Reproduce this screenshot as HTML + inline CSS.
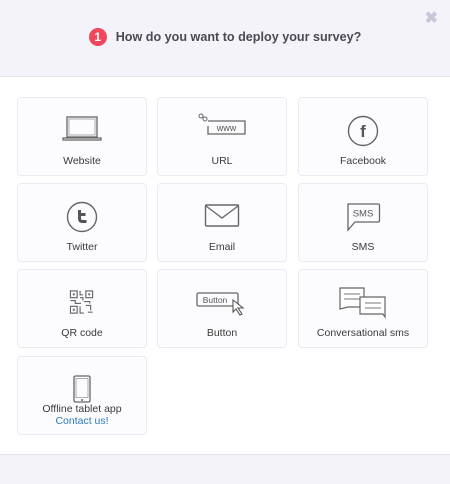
<!DOCTYPE html>
<html><head><style>
*{margin:0;padding:0;box-sizing:border-box}
body{width:450px;height:484px;background:#fff;font-family:"Liberation Sans",sans-serif;position:relative;overflow:hidden;color:#444}
.hdr{position:absolute;left:0;top:0;width:450px;height:77px;background:#f4f3fa;border-bottom:1px solid #e4e3ee}
.ttl{position:absolute;top:28px;left:0;width:450px;text-align:center;font-size:12.6px;font-weight:bold;color:#4a4a52;line-height:18px}
.num{display:inline-block;width:18px;height:18px;border-radius:50%;background:#f0485a;color:#fff;font-size:12px;line-height:18px;text-align:center;margin-right:9px;vertical-align:top}
.x{position:absolute;right:12px;top:8px;color:#c9c6dc;font-size:16px;font-weight:bold}
.card{position:absolute;width:130px;height:79px;border:1px solid #ebeaf3;border-radius:4px;background:#fcfcff}
.lbl{position:absolute;left:0;width:100%;top:57px;text-align:center;font-size:10.5px;color:#3a3a3a}
.card svg{position:absolute;left:50%;transform:translateX(-50%)}
.ftr{position:absolute;left:0;top:454px;width:450px;height:30px;background:#f4f3fa;border-top:1px solid #e4e3ee}
</style></head><body>
<div class="hdr"><div class="ttl"><span class="num">1</span>How do you want to deploy your survey?</div><div class="x">✖</div></div>

<div class="card" style="left:17px;top:97px">
<svg width="40" height="26" viewBox="0 0 40 26" style="top:18px"><rect x="5" y="1" width="30" height="20" fill="none" stroke="#666" stroke-width="1.3"/><rect x="7" y="3" width="26" height="16" fill="none" stroke="#999" stroke-width=".8"/><path d="M1 22h38v2H1z" fill="none" stroke="#666" stroke-width="1.2"/></svg>
<div class="lbl">Website</div></div>
<div class="card" style="left:157px;top:97px">
<svg width="48" height="26" viewBox="0 0 48 26" style="top:15px"><circle cx="3" cy="3" r="2" fill="none" stroke="#666"/><circle cx="7" cy="6" r="2" fill="none" stroke="#666"/><path d="M10 8h37v13H10V13" fill="none" stroke="#666" stroke-width="1.3"/><text x="28.5" y="18" font-size="9" text-anchor="middle" fill="#555" font-family="Liberation Sans">www</text></svg>
<div class="lbl">URL</div></div>
<div class="card" style="left:298px;top:97px">
<svg width="32" height="32" viewBox="0 0 32 32" style="top:17px"><circle cx="16" cy="16" r="14.5" fill="none" stroke="#666" stroke-width="1.4"/><text x="16" y="22" font-size="17" font-weight="bold" text-anchor="middle" fill="#555" font-family="Liberation Sans">f</text></svg>
<div class="lbl">Facebook</div></div>

<div class="card" style="left:17px;top:183px">
<svg width="32" height="32" viewBox="0 0 32 32" style="top:17px"><circle cx="16" cy="16" r="14.5" fill="none" stroke="#666" stroke-width="1.4"/><path d="M13.5 9v8.5q0 3 3 3h4M13.5 13.5h6" fill="none" stroke="#555" stroke-width="3"/></svg>
<div class="lbl">Twitter</div></div>
<div class="card" style="left:157px;top:183px">
<svg width="36" height="24" viewBox="0 0 36 24" style="top:20px"><rect x="1.5" y="1" width="33" height="21" rx="1" fill="none" stroke="#666" stroke-width="1.4"/><path d="M2 2l16 12 16-12" fill="none" stroke="#666" stroke-width="1.3"/></svg>
<div class="lbl">Email</div></div>
<div class="card" style="left:298px;top:183px">
<svg width="36" height="30" viewBox="0 0 36 30" style="top:19px"><path d="M3 1h30q1.5 0 1.5 1.5v15q0 1.5-1.5 1.5H10l-7 8V2.5Q3 1 3 1z" fill="none" stroke="#666" stroke-width="1.3"/><text x="18" y="13.5" font-size="9.5" text-anchor="middle" fill="#555" font-family="Liberation Sans">SMS</text></svg>
<div class="lbl">SMS</div></div>

<div class="card" style="left:17px;top:269px">
<svg width="27" height="27" viewBox="0 0 28 28" style="top:19px"><g fill="none" stroke="#666" stroke-width="1.2"><rect x="2" y="2" width="7" height="7"/><rect x="18" y="2" width="7" height="7"/><rect x="2" y="18" width="7" height="7"/><path d="M12 2v4h3M12 9h3v3M2 12h5v3h6M16 13h6v2M18 17h5v5M12 18v7h4M20 24h5"/></g><rect x="4.5" y="4.5" width="2" height="2" fill="#666"/><rect x="20.5" y="4.5" width="2" height="2" fill="#666"/><rect x="4.5" y="20.5" width="2" height="2" fill="#666"/></svg>
<div class="lbl">QR code</div></div>
<div class="card" style="left:157px;top:269px">
<svg width="52" height="28" viewBox="0 0 52 28" style="top:21px"><rect x="1" y="2" width="41" height="13" rx="1.5" fill="none" stroke="#666" stroke-width="1.3"/><text x="19" y="12" font-size="8.5" text-anchor="middle" fill="#555" font-family="Liberation Sans">Button</text><path d="M37 9l0 12 3-3 4 6 2-1-4-6h5z" fill="#fff" stroke="#555" stroke-width="1.1"/></svg>
<div class="lbl">Button</div></div>
<div class="card" style="left:298px;top:269px">
<svg width="50" height="32" viewBox="0 0 50 32" style="top:17px"><path d="M2 1h24v19H10l-8 2z" fill="#fff" stroke="#666" stroke-width="1.2"/><path d="M6 7h16M6 12h16" stroke="#777"/><path d="M22 10h25v20l-2-3H22z" fill="#fff" stroke="#666" stroke-width="1.2"/><path d="M27 16h16M27 21h16" stroke="#777"/></svg>
<div class="lbl">Conversational sms</div></div>

<div class="card" style="left:17px;top:356px">
<svg width="20" height="28" viewBox="0 0 20 28" style="top:18px"><rect x="2" y="1" width="16" height="26" rx="1.5" fill="none" stroke="#666" stroke-width="1.3"/><rect x="4" y="3.5" width="12" height="19" fill="none" stroke="#999" stroke-width=".8"/><circle cx="10" cy="25" r="1" fill="#666"/></svg>
<div class="lbl" style="top:46px">Offline tablet app</div>
<div class="lbl" style="top:58px;color:#2a7ab8">Contact us!</div></div>

<div class="ftr"></div>
</body></html>
